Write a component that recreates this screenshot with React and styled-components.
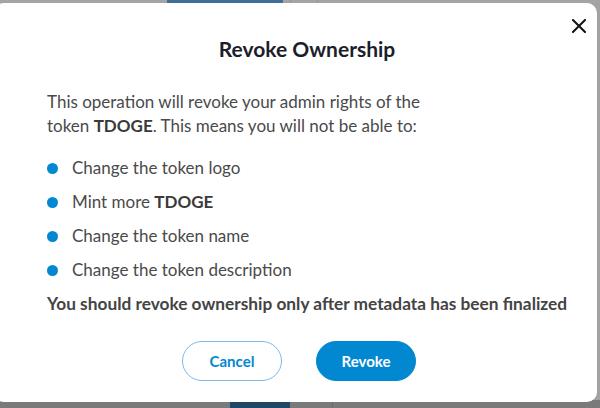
import React from "react";
import styled, { createGlobalStyle } from "styled-components";

const Global = createGlobalStyle`
  html, body { margin: 0; padding: 0; }
  body {
    width: 600px;
    height: 408px;
    overflow: hidden;
    font-family: Lato, "Open Sans", sans-serif;
  }
`;

const Backdrop = styled.div`
  position: relative;
  width: 600px;
  height: 408px;
  background: #a2a2a2;
  overflow: hidden;
`;

const PageStrip = styled.div`
  display: flex;
  height: 3px;
  background: ${(p) => p.$bg};
`;

const PageBlock = styled.div`
  width: ${(p) => p.$w}px;
  background: ${(p) => p.$bg};
  border-right: ${(p) => (p.$line ? `1px solid ${p.$line}` : "none")};
`;

const BottomStrip = styled.div`
  position: absolute;
  left: 0;
  right: 0;
  bottom: 0;
  height: 8px;
  display: flex;
  background: #7a7a7a;
`;

const Modal = styled.div`
  position: absolute;
  top: 3px;
  left: -6px;
  width: 603px;
  height: 399px;
  box-sizing: border-box;
  background: #ffffff;
  border-radius: 10px;
  padding: 34px 0 0 53px;
  display: flex;
  flex-direction: column;
`;

const Close = styled.button`
  position: absolute;
  top: 13px;
  right: 8px;
  width: 20px;
  height: 20px;
  padding: 0;
  border: none;
  background: none;
  display: flex;
  align-items: center;
  justify-content: center;
`;

const Title = styled.h2`
  margin: 0 0 29px -53px;
  padding-left: 23px;
  font-size: 21px;
  line-height: 24px;
  font-weight: 700;
  color: #1c1e2b;
  text-align: center;
`;

const Paragraph = styled.p`
  margin: 0 0 18px;
  font-size: 17px;
  line-height: 24px;
  color: #4a4a4a;
  b { color: #3a3a3a; }
`;

const List = styled.ul`
  margin: 0;
  padding: 0;
  list-style: none;
  display: flex;
  flex-direction: column;
  gap: 10px;
`;

const Item = styled.li`
  display: flex;
  align-items: center;
  gap: 14px;
  font-size: 17px;
  line-height: 24px;
  color: #4a4a4a;
  b { color: #3a3a3a; }
`;

const Dot = styled.span`
  width: 11px;
  height: 11px;
  border-radius: 50%;
  background: #0288d1;
  flex: none;
`;

const Warning = styled.p`
  margin: 10px 0 0;
  font-size: 17.3px;
  line-height: 24px;
  font-weight: 700;
  color: #444444;
`;

const Actions = styled.div`
  display: flex;
  justify-content: center;
  gap: 34px;
  margin: 25px 0 0 -53px;
  padding-left: 7px;
`;

const Button = styled.button`
  width: 100px;
  height: 40px;
  border-radius: 20px;
  box-sizing: border-box;
  font-family: Lato, "Open Sans", sans-serif;
  font-size: 15px;
  font-weight: 700;
  cursor: pointer;
  border: 1px solid ${(p) => (p.$primary ? "#0288d1" : "#7ab9ea")};
  background: ${(p) => (p.$primary ? "#0288d1" : "#ffffff")};
  color: ${(p) => (p.$primary ? "#ffffff" : "#0288d1")};
`;

export default function App() {
  return (
    <>
      <Global />
      <Backdrop>
        <PageStrip $bg="#a4a4a4">
          <PageBlock $w={167} $bg="#a4a4a4" />
          <PageBlock $w={116} $bg="#3f6e96" />
          <PageBlock $w={7} $bg="#a4a4a4" $line="#979797" />
          <PageBlock $w={26} $bg="#a4a4a4" $line="#979797" />
        </PageStrip>
        <BottomStrip>
          <PageBlock $w={230} $bg="#7a7a7a" />
          <PageBlock $w={60} $bg="#1f4866" />
          <PageBlock $w={42} $bg="#7a7a7a" $line="#6c6c6c" />
        </BottomStrip>
        <Modal>
          <Close aria-label="Close">
            <svg width="14" height="14" viewBox="0 0 14 14">
              <path d="M1 1 L13 13 M13 1 L1 13" stroke="#111" strokeWidth="2" strokeLinecap="square" />
            </svg>
          </Close>
          <Title>Revoke Ownership</Title>
          <Paragraph>
            This operation will revoke your admin rights of the
            <br />
            token <b>TDOGE</b>. This means you will not be able to:
          </Paragraph>
          <List>
            <Item><Dot />Change the token logo</Item>
            <Item><Dot /><span>Mint more <b>TDOGE</b></span></Item>
            <Item><Dot />Change the token name</Item>
            <Item><Dot />Change the token description</Item>
          </List>
          <Warning>You should revoke ownership only after metadata has been finalized</Warning>
          <Actions>
            <Button>Cancel</Button>
            <Button $primary>Revoke</Button>
          </Actions>
        </Modal>
      </Backdrop>
    </>
  );
}
